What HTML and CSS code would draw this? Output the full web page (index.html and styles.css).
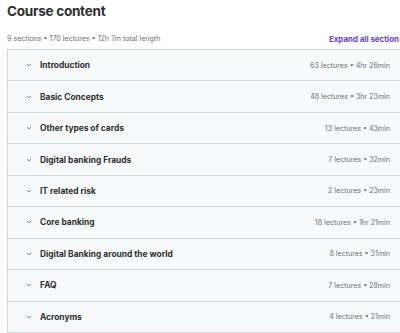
FILE: index.html
```html
<!DOCTYPE html>
<html lang="en">
<head>
    <meta charset="UTF-8">
    <title>Course content</title>
    <link rel="stylesheet" href="styles.css">
</head>
<body>
<div class="content">
    <h2 class="title">Course content</h2>
    <div class="summary">
        <span class="stats">9 sections • 170 lectures • 12h 7m total length</span>
        <button class="expand">Expand all section</button>
    </div>
    <div class="sections">
        <div class="section"><span class="chev"><svg width="6" height="4" viewBox="0 0 6 4"><path d="M1 1l2 2 2-2" fill="none" stroke="#6a6f73" stroke-width="0.8"/></svg></span><span class="name">Introduction</span><span class="meta">63 lectures • 4hr 26min</span></div>
        <div class="section"><span class="chev"><svg width="6" height="4" viewBox="0 0 6 4"><path d="M1 1l2 2 2-2" fill="none" stroke="#6a6f73" stroke-width="0.8"/></svg></span><span class="name">Basic Concepts</span><span class="meta">48 lectures • 3hr 23min</span></div>
        <div class="section"><span class="chev"><svg width="6" height="4" viewBox="0 0 6 4"><path d="M1 1l2 2 2-2" fill="none" stroke="#6a6f73" stroke-width="0.8"/></svg></span><span class="name">Other types of cards</span><span class="meta">13 lectures • 43min</span></div>
        <div class="section"><span class="chev"><svg width="6" height="4" viewBox="0 0 6 4"><path d="M1 1l2 2 2-2" fill="none" stroke="#6a6f73" stroke-width="0.8"/></svg></span><span class="name">Digital banking Frauds</span><span class="meta">7 lectures • 32min</span></div>
        <div class="section"><span class="chev"><svg width="6" height="4" viewBox="0 0 6 4"><path d="M1 1l2 2 2-2" fill="none" stroke="#6a6f73" stroke-width="0.8"/></svg></span><span class="name">IT related risk</span><span class="meta">2 lectures • 23min</span></div>
        <div class="section"><span class="chev"><svg width="6" height="4" viewBox="0 0 6 4"><path d="M1 1l2 2 2-2" fill="none" stroke="#6a6f73" stroke-width="0.8"/></svg></span><span class="name">Core banking</span><span class="meta">18 lectures • 1hr 21min</span></div>
        <div class="section"><span class="chev"><svg width="6" height="4" viewBox="0 0 6 4"><path d="M1 1l2 2 2-2" fill="none" stroke="#6a6f73" stroke-width="0.8"/></svg></span><span class="name">Digital Banking around the world</span><span class="meta">8 lectures • 31min</span></div>
        <div class="section"><span class="chev"><svg width="6" height="4" viewBox="0 0 6 4"><path d="M1 1l2 2 2-2" fill="none" stroke="#6a6f73" stroke-width="0.8"/></svg></span><span class="name">FAQ</span><span class="meta">7 lectures • 28min</span></div>
        <div class="section"><span class="chev"><svg width="6" height="4" viewBox="0 0 6 4"><path d="M1 1l2 2 2-2" fill="none" stroke="#6a6f73" stroke-width="0.8"/></svg></span><span class="name">Acronyms</span><span class="meta">4 lectures • 21min</span></div>
    </div>
</div>
</body>
</html>
```

FILE: styles.css
```css
body {
    margin: 0;
    font-family: Inter, "Noto Sans", sans-serif;
    color: #2d2f31;
    background: #fff;
    overflow: hidden;
}

.content {
    width: 410px;
    padding-left: 7px;
}

.title {
    margin: 0;
    padding-top: 2px;
    height: 26px;
    line-height: 18px;
    font-size: 13.6px;
    font-weight: 700;
    letter-spacing: -0.3px;
}

.summary {
    display: flex;
    justify-content: space-between;
    align-items: center;
    height: 21px;
    padding-right: 18px;
}

.stats {
    font-size: 7.1px;
    color: #6a6f73;
}

.expand {
    background: none;
    border: none;
    padding: 0;
    font-family: inherit;
    font-size: 7.9px;
    font-weight: 700;
    color: #6a3ec9;
    white-space: nowrap;
}

.sections {
    border: 1px solid #d1d7dc;
    border-bottom: none;
}

.section {
    display: flex;
    align-items: center;
    height: 31.45px;
    box-sizing: border-box;
    border-bottom: 1px solid #d1d7dc;
    background: #f7f9fa;
    padding-left: 18px;
    padding-right: 26px;
}

.chev {
    width: 14px;
    display: flex;
    align-items: center;
}

.name {
    flex: 1;
    font-size: 8.4px;
    font-weight: 700;
}

.meta {
    font-size: 7.1px;
    color: #6a6f73;
}
```
